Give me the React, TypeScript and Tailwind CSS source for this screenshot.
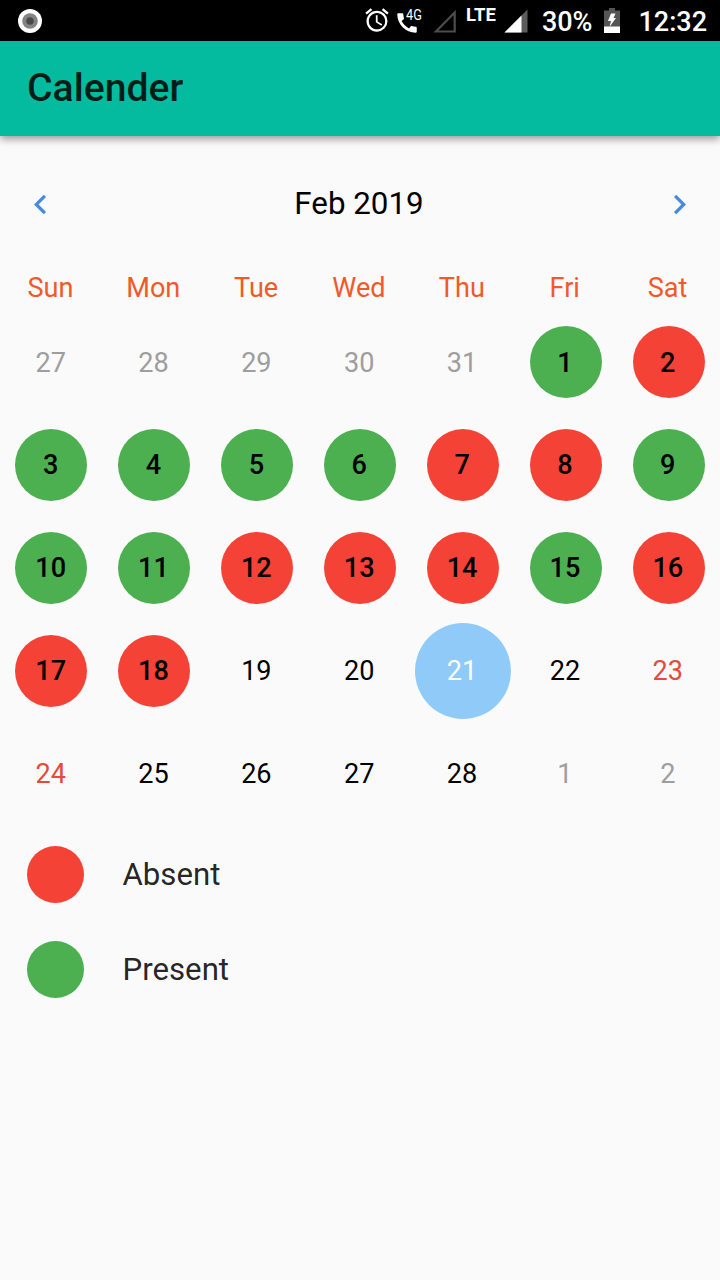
import clsx from 'clsx';
import { MdAlarm, MdCall, MdChevronLeft, MdChevronRight } from 'react-icons/md';

type DayStatus = 'present' | 'absent' | 'today' | 'weekend' | 'outside' | 'plain';

interface Day {
  label: number;
  status: DayStatus;
}

const WEEKDAYS = ['Sun', 'Mon', 'Tue', 'Wed', 'Thu', 'Fri', 'Sat'];

const PRESENT = [1, 3, 4, 5, 6, 9, 10, 11, 15];
const ABSENT = [2, 7, 8, 12, 13, 14, 16, 17, 18];
const TODAY = 21;

function statusOf(day: number): DayStatus {
  if (PRESENT.includes(day)) return 'present';
  if (ABSENT.includes(day)) return 'absent';
  if (day === TODAY) return 'today';
  // Feb 1st is a Friday, so a shift of 4 puts Sunday at 0.
  const weekday = (day + 4) % 7;
  return weekday === 0 || weekday === 6 ? 'weekend' : 'plain';
}

const outside = (label: number): Day => ({ label, status: 'outside' });

const DAYS: Day[] = [
  ...[27, 28, 29, 30, 31].map(outside),
  ...Array.from({ length: 28 }, (_, i) => ({ label: i + 1, status: statusOf(i + 1) })),
  ...[1, 2].map(outside),
];

const DAY_STYLES: Record<DayStatus, string> = {
  present: 'size-[72px] bg-[#4caf50] font-medium text-black',
  absent: 'size-[72px] bg-[#f44336] font-medium text-black',
  today: 'size-24 bg-[#90caf9] text-white',
  weekend: 'size-[72px] text-[#e64a3c]',
  outside: 'size-[72px] text-[#9e9e9e]',
  plain: 'size-[72px] text-black',
};

function StatusBar() {
  return (
    <div className="flex h-[41px] items-center bg-black text-white">
      <svg className="ml-[18px] size-6" viewBox="0 0 24 24">
        <circle cx="12" cy="12" r="12" fill="#fff" />
        <circle cx="12" cy="12" r="7.8" fill="#848484" />
        <circle cx="12" cy="12" r="3.7" fill="#4a4a4a" />
      </svg>
      <MdAlarm className="mb-px ml-auto size-[28px]" />
      <div className="relative ml-1 h-[41px] w-[30px]">
        <MdCall className="absolute top-[10px] -left-[1.500px] size-[26px]" />
        <span className="absolute top-[8px] left-[11px] origin-left scale-x-85 text-[15px] leading-[15px]">4G</span>
      </div>
      <svg className="ml-2 h-[25px] w-[24px]" viewBox="0 0 24 25">
        <path d="M3 23.5 21.7 4.5V23.5Z" fill="none" stroke="#4d4d4d" strokeWidth="2.2" />
      </svg>
      <span className="mb-[12px] ml-[9px] text-[18.500px] leading-[18px] font-bold">LTE</span>
      <svg className="ml-2 h-[25px] w-[24px]" viewBox="0 0 24 25">
        <path d="M0.5 24.5 23.5 1.5V24.5Z" fill="#5c5c5c" />
        <path d="M0.5 24.5 17.5 7.5V24.5Z" fill="#fff" />
      </svg>
      <span className="mt-0.5 ml-[14px] text-[27px] leading-8 font-medium">30%</span>
      <svg className="ml-3 h-[25px] w-4" viewBox="0 0 16 25">
        <path d="M5 0h6v2.5h5V25H0V2.500h5Z" fill="#555" />
        <path d="M0 18.500h16V25H0Z" fill="#fff" />
        <path d="M7 5.500h4.500L9.500 10H12L5.500 19 7 13H4Z" fill="#fff" />
      </svg>
      <span className="mt-0.5 mr-[13px] ml-[18px] text-[27px] leading-8 font-medium">12:32</span>
    </div>
  );
}

function AppBar({ title }: { title: string }) {
  return (
    <header className="flex h-[95px] items-center bg-[#04bb9f] px-[27px] shadow-[0_3px_8px_rgba(0,0,0,0.4)]">
      <h1 className="text-[39.200px] leading-none font-medium text-black/85">{title}</h1>
    </header>
  );
}

function MonthHeader({ label }: { label: string }) {
  return (
    <div className="flex h-[136px] items-center justify-between px-[21px] text-[#448ae0]">
      <button type="button" aria-label="Previous month">
        <MdChevronLeft className="size-[39px]" />
      </button>
      <h2 className="pr-0.5 text-[31.300px] leading-none text-black">{label}</h2>
      <button type="button" aria-label="Next month">
        <MdChevronRight className="size-[39px]" />
      </button>
    </div>
  );
}

function Calendar() {
  return (
    <div className="grid grid-cols-7 text-[27.100px]">
      {WEEKDAYS.map((name) => (
        <div key={name} className="flex h-[39px] items-center justify-center pr-0.5 pb-[5.500px] text-[#f05a28]">
          {name}
        </div>
      ))}
      {DAYS.map((day, i) => (
        <div key={i} className="flex h-[102.860px] items-center justify-center">
          <div className={clsx('flex items-center justify-center rounded-full pt-px pr-[1.500px]', DAY_STYLES[day.status])}>
            {day.label}
          </div>
        </div>
      ))}
    </div>
  );
}

function LegendItem({ label, dot }: { label: string; dot: string }) {
  return (
    <li className="flex h-[95px] items-center gap-[38.500px]">
      <span className={clsx('size-[57px] rounded-full', dot)} />
      <span className="text-[31.200px] leading-none text-black/87">{label}</span>
    </li>
  );
}

export default function App() {
  return (
    <div className="h-[1280px] w-[720px] overflow-hidden bg-[#fafafa] font-['Roboto',sans-serif]">
      <StatusBar />
      <AppBar title="Calender" />
      <MonthHeader label="Feb 2019" />
      <Calendar />
      <ul className="px-[27px] pt-0.5">
        <LegendItem label="Absent" dot="bg-[#f44336]" />
        <LegendItem label="Present" dot="bg-[#4caf50]" />
      </ul>
    </div>
  );
}
